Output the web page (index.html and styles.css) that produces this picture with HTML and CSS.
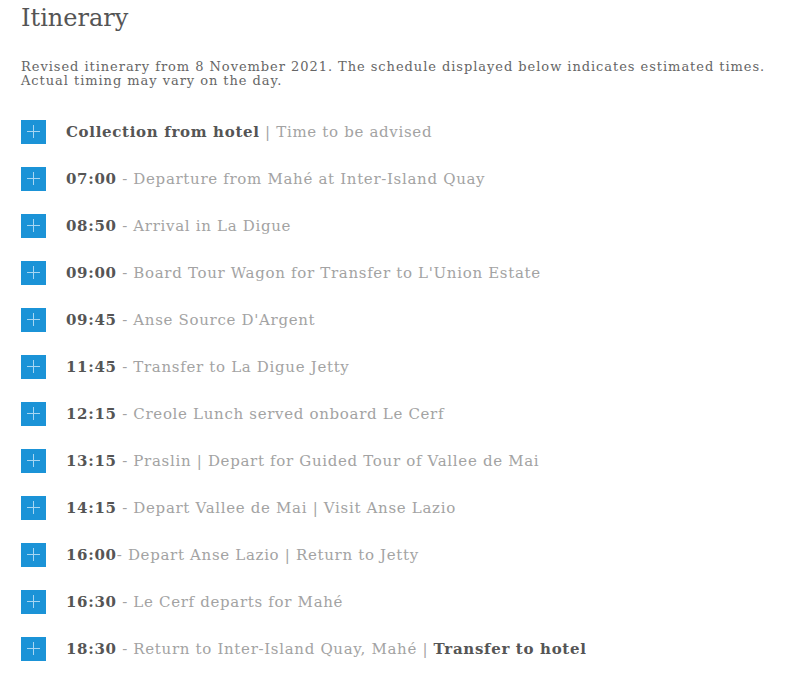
FILE: index.html
```html
<!DOCTYPE html>
<html>
<head>
<meta charset="utf-8">
<link rel="stylesheet" href="styles.css">
</head>
<body>
<div class="page">
  <h1 class="title">Itinerary</h1>
  <p class="intro">Revised itinerary from 8 November 2021. The schedule displayed below indicates estimated times. Actual timing may vary on the day.</p>
  <ul class="list">
    <li class="item"><span class="plus"></span><span class="text"><b>Collection from hotel</b> | Time to be advised</span></li>
    <li class="item"><span class="plus"></span><span class="text"><b>07:00</b> - Departure from Mahé at Inter-Island Quay</span></li>
    <li class="item"><span class="plus"></span><span class="text"><b>08:50</b> - Arrival in La Digue</span></li>
    <li class="item"><span class="plus"></span><span class="text"><b>09:00</b> - Board Tour Wagon for Transfer to L'Union Estate</span></li>
    <li class="item"><span class="plus"></span><span class="text"><b>09:45</b> - Anse Source D'Argent</span></li>
    <li class="item"><span class="plus"></span><span class="text"><b>11:45</b> - Transfer to La Digue Jetty</span></li>
    <li class="item"><span class="plus"></span><span class="text"><b>12:15</b> - Creole Lunch served onboard Le Cerf</span></li>
    <li class="item"><span class="plus"></span><span class="text"><b>13:15</b> - Praslin | Depart for Guided Tour of Vallee de Mai</span></li>
    <li class="item"><span class="plus"></span><span class="text"><b>14:15</b> - Depart Vallee de Mai | Visit Anse Lazio</span></li>
    <li class="item"><span class="plus"></span><span class="text"><b>16:00</b>- Depart Anse Lazio | Return to Jetty</span></li>
    <li class="item"><span class="plus"></span><span class="text"><b>16:30</b> - Le Cerf departs for Mahé</span></li>
    <li class="item"><span class="plus"></span><span class="text"><b>18:30</b> - Return to Inter-Island Quay, Mahé | <b>Transfer to hotel</b></span></li>
  </ul>
</div>
</body>
</html>
```

FILE: styles.css
```css
html, body {
  margin: 0;
  padding: 0;
  background: #ffffff;
}
.page {
  padding: 0 4px 0 21px;
  font-family: "DejaVu Serif", "Liberation Serif", serif;
}
.title {
  margin: 0;
  padding-top: 3px;
  font-size: 24px;
  font-weight: normal;
  line-height: 30px;
  color: #555555;
  letter-spacing: 0;
}
.intro {
  margin: 27px 0 0 0;
  font-size: 13px;
  line-height: 14px;
  color: #666666;
  letter-spacing: 0.95px;
}
.list {
  list-style: none;
  margin: 32px 0 0 0;
  padding: 0;
  display: flex;
  flex-direction: column;
  gap: 23px;
}
.item {
  display: flex;
  align-items: center;
  height: 24px;
}
.plus {
  position: relative;
  width: 25px;
  height: 24px;
  background: #1b93d7;
  flex: none;
  margin-right: 20px;
}
.plus::before,
.plus::after {
  content: "";
  position: absolute;
  background: #a8d6f2;
}
.plus::before {
  left: 6px;
  right: 6px;
  top: 11px;
  height: 1px;
}
.plus::after {
  top: 5px;
  bottom: 6px;
  left: 12px;
  width: 1px;
}
.text {
  font-size: 15px;
  color: #a3a3a3;
  letter-spacing: 0.68px;
  white-space: nowrap;
}
.text b {
  color: #555555;
  font-weight: bold;
}
```
